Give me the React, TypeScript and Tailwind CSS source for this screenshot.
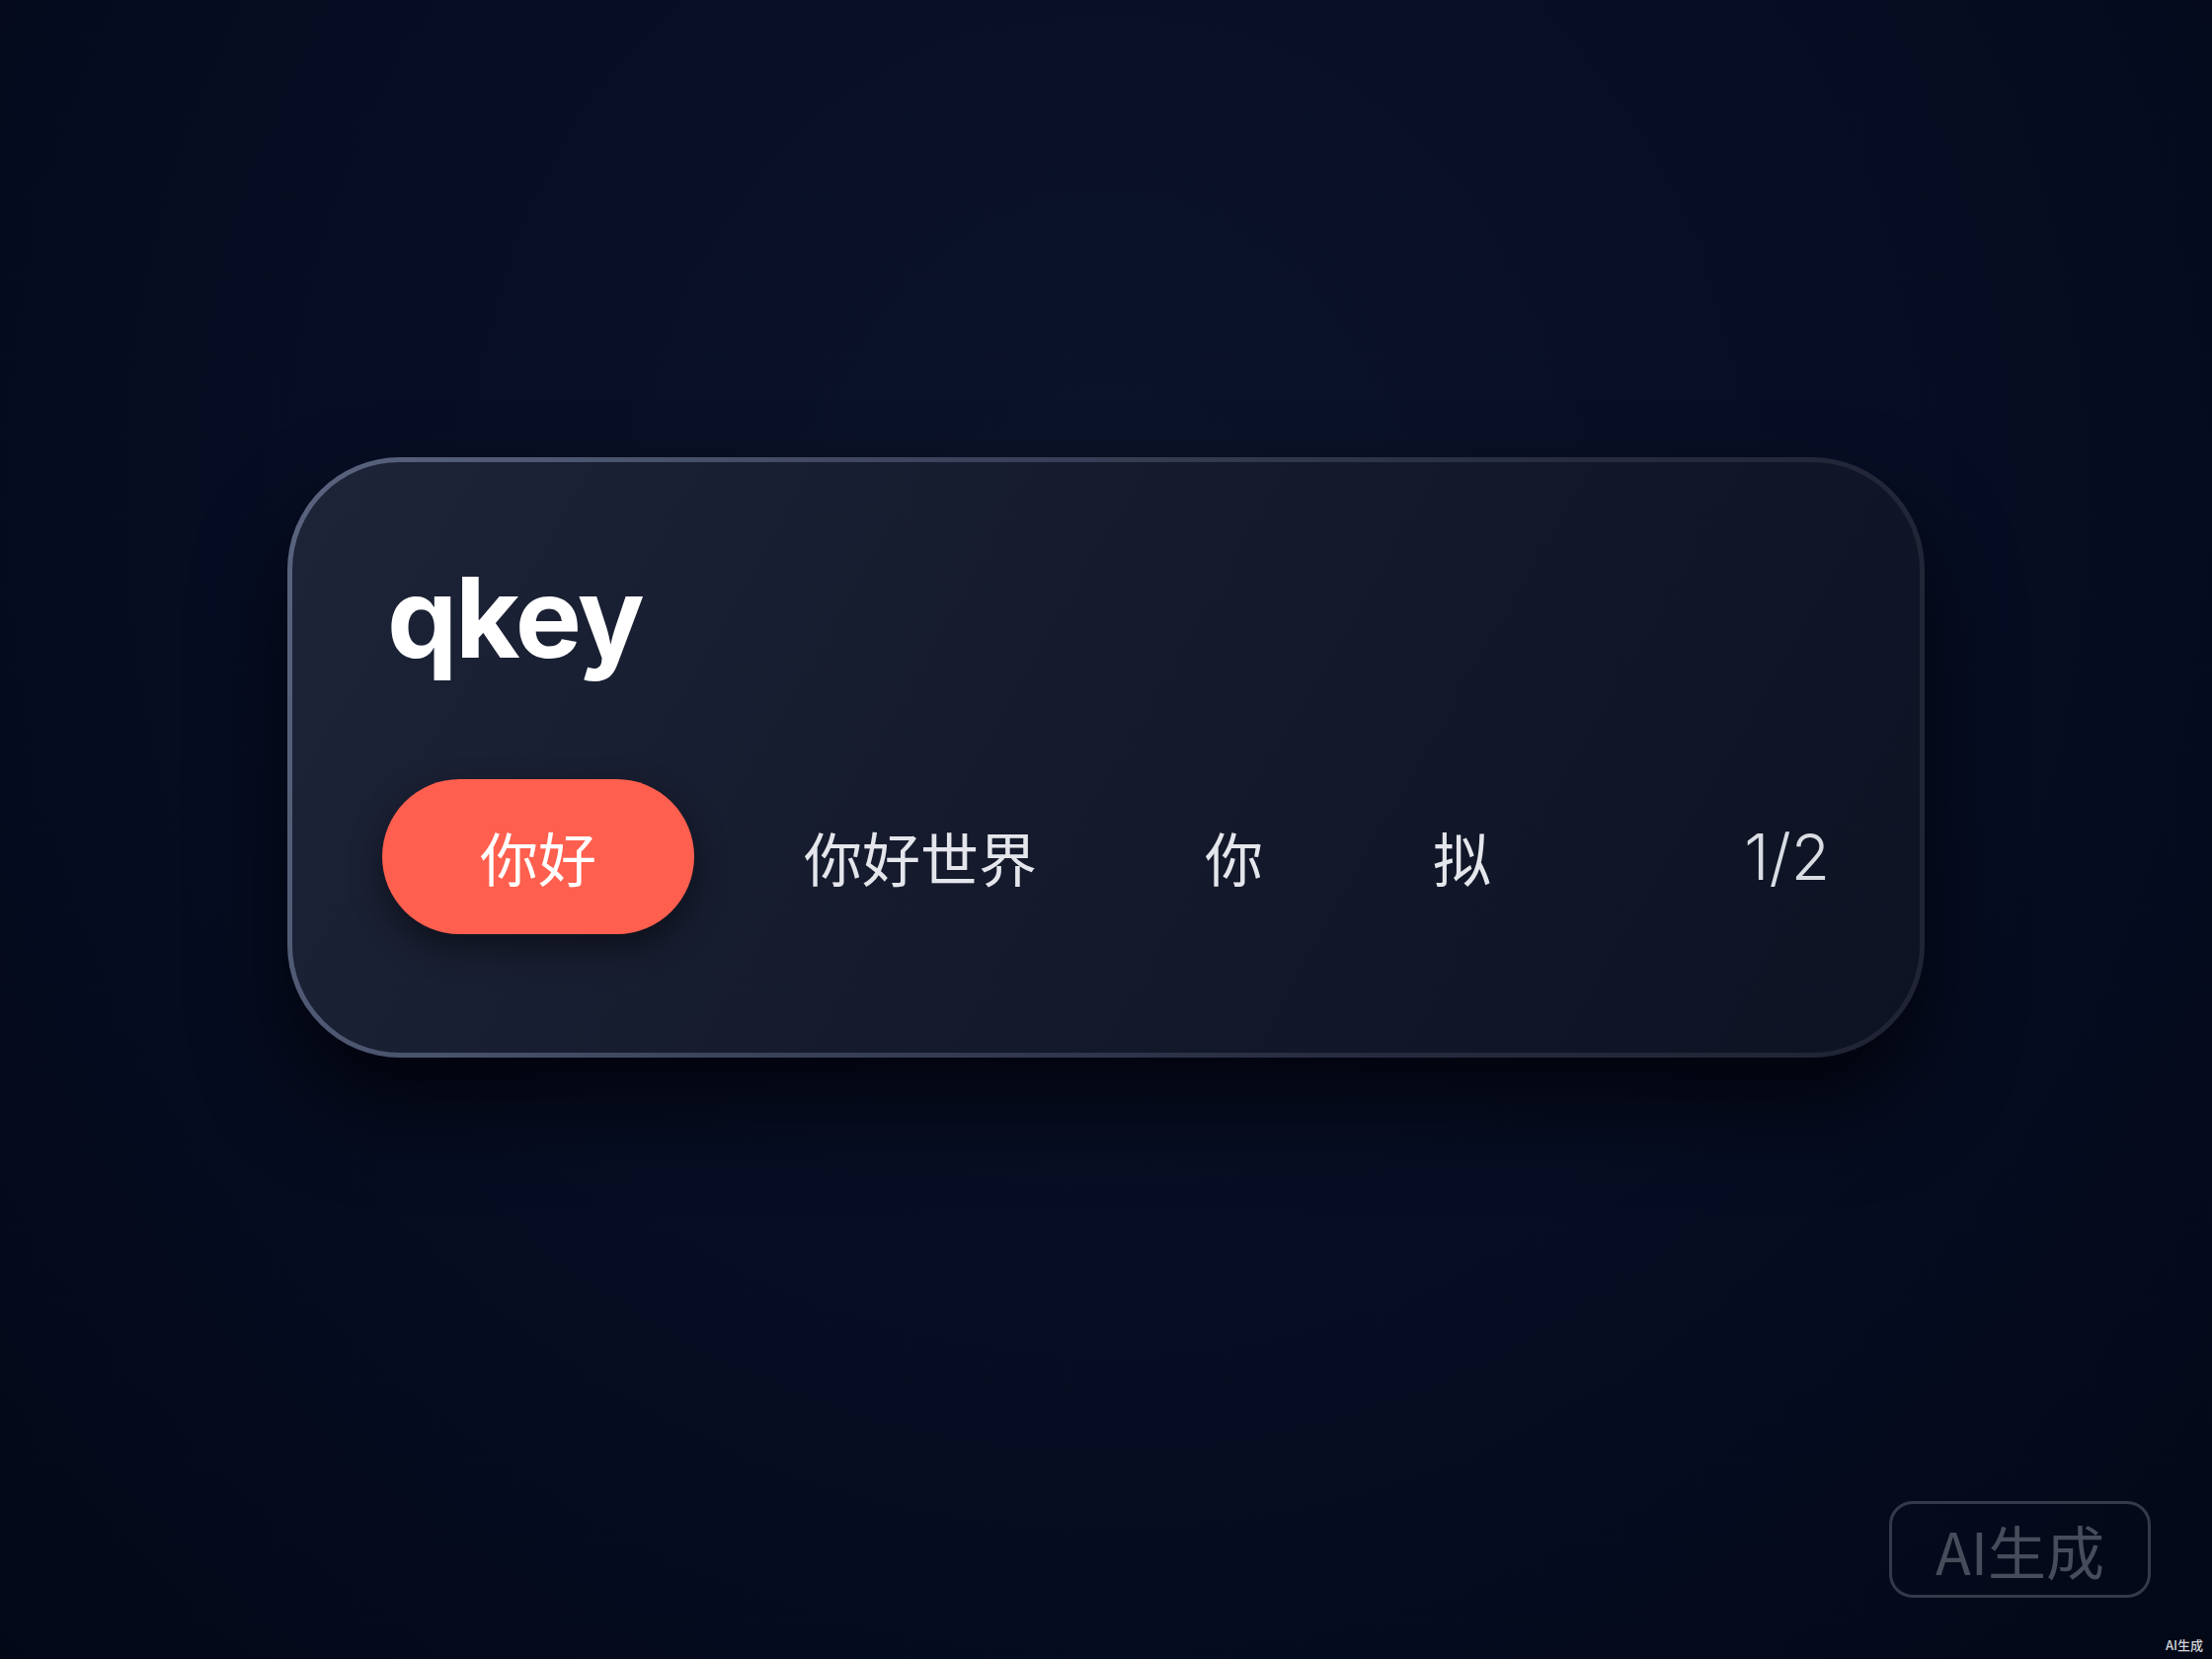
const candidates = [
  { text: "你好世界", gap: "ml-[111px]" },
  { text: "你", gap: "ml-[170px]" },
  { text: "拟", gap: "ml-[172px]" },
];

function CandidateBar() {
  return (
    <div className="w-[1658px] rounded-[114px] bg-[linear-gradient(110deg,#5a647f_0%,#3c445c_35%,#262b3e_70%,#1f2333_100%)] p-[5px] shadow-[0_50px_90px_rgba(0,0,6,0.75)]">
      <div className="flex h-[598px] w-[1648px] flex-col rounded-[109px] bg-[linear-gradient(120deg,#1e2438_0%,#151b2d_45%,#0d1323_100%)] px-[91px] pt-[101px]">
        <div className="pl-[5px] font-['Inter',sans-serif] text-[113px] font-bold leading-none tracking-[-0.02em] text-white">qkey</div>
        <div className="mt-[107px] flex items-center font-['Noto_Sans_CJK_SC','Noto_Sans',sans-serif]">
          <div className="flex h-[157px] w-[316px] items-center justify-center rounded-full bg-[#ff5f4e] text-[59px] leading-none text-white shadow-[0_14px_34px_rgba(0,0,0,0.45)]">
            你好
          </div>
          {candidates.map((c) => (
            <div key={c.text} className={`${c.gap} text-[59px] leading-none text-[#e4e6ec]`}>
              {c.text}
            </div>
          ))}
          <div className="ml-auto font-['Inter',sans-serif] text-[64px] font-light leading-none text-[#d9dce3]">1/2</div>
        </div>
      </div>
    </div>
  );
}

export default function App() {
  return (
    <div className="relative h-[1680px] w-[2240px] overflow-hidden bg-[radial-gradient(ellipse_at_50%_30%,#0b1329_0%,#070e24_50%,#030817_100%)] pl-[291px] pt-[463px]">
      <CandidateBar />
      <div className="absolute bottom-[62px] right-[62px] flex h-[98px] w-[265px] items-center justify-center rounded-[24px] border-[3px] border-[#353a4a] font-['Noto_Sans_CJK_SC',sans-serif] text-[59px] leading-none text-[#474c5b]">
        AI生成
      </div>
      <div className="absolute bottom-[8px] right-[9px] font-['Noto_Sans_CJK_SC',sans-serif] text-[13px] font-medium leading-none text-[#d2d5db]">
        AI生成
      </div>
    </div>
  );
}
